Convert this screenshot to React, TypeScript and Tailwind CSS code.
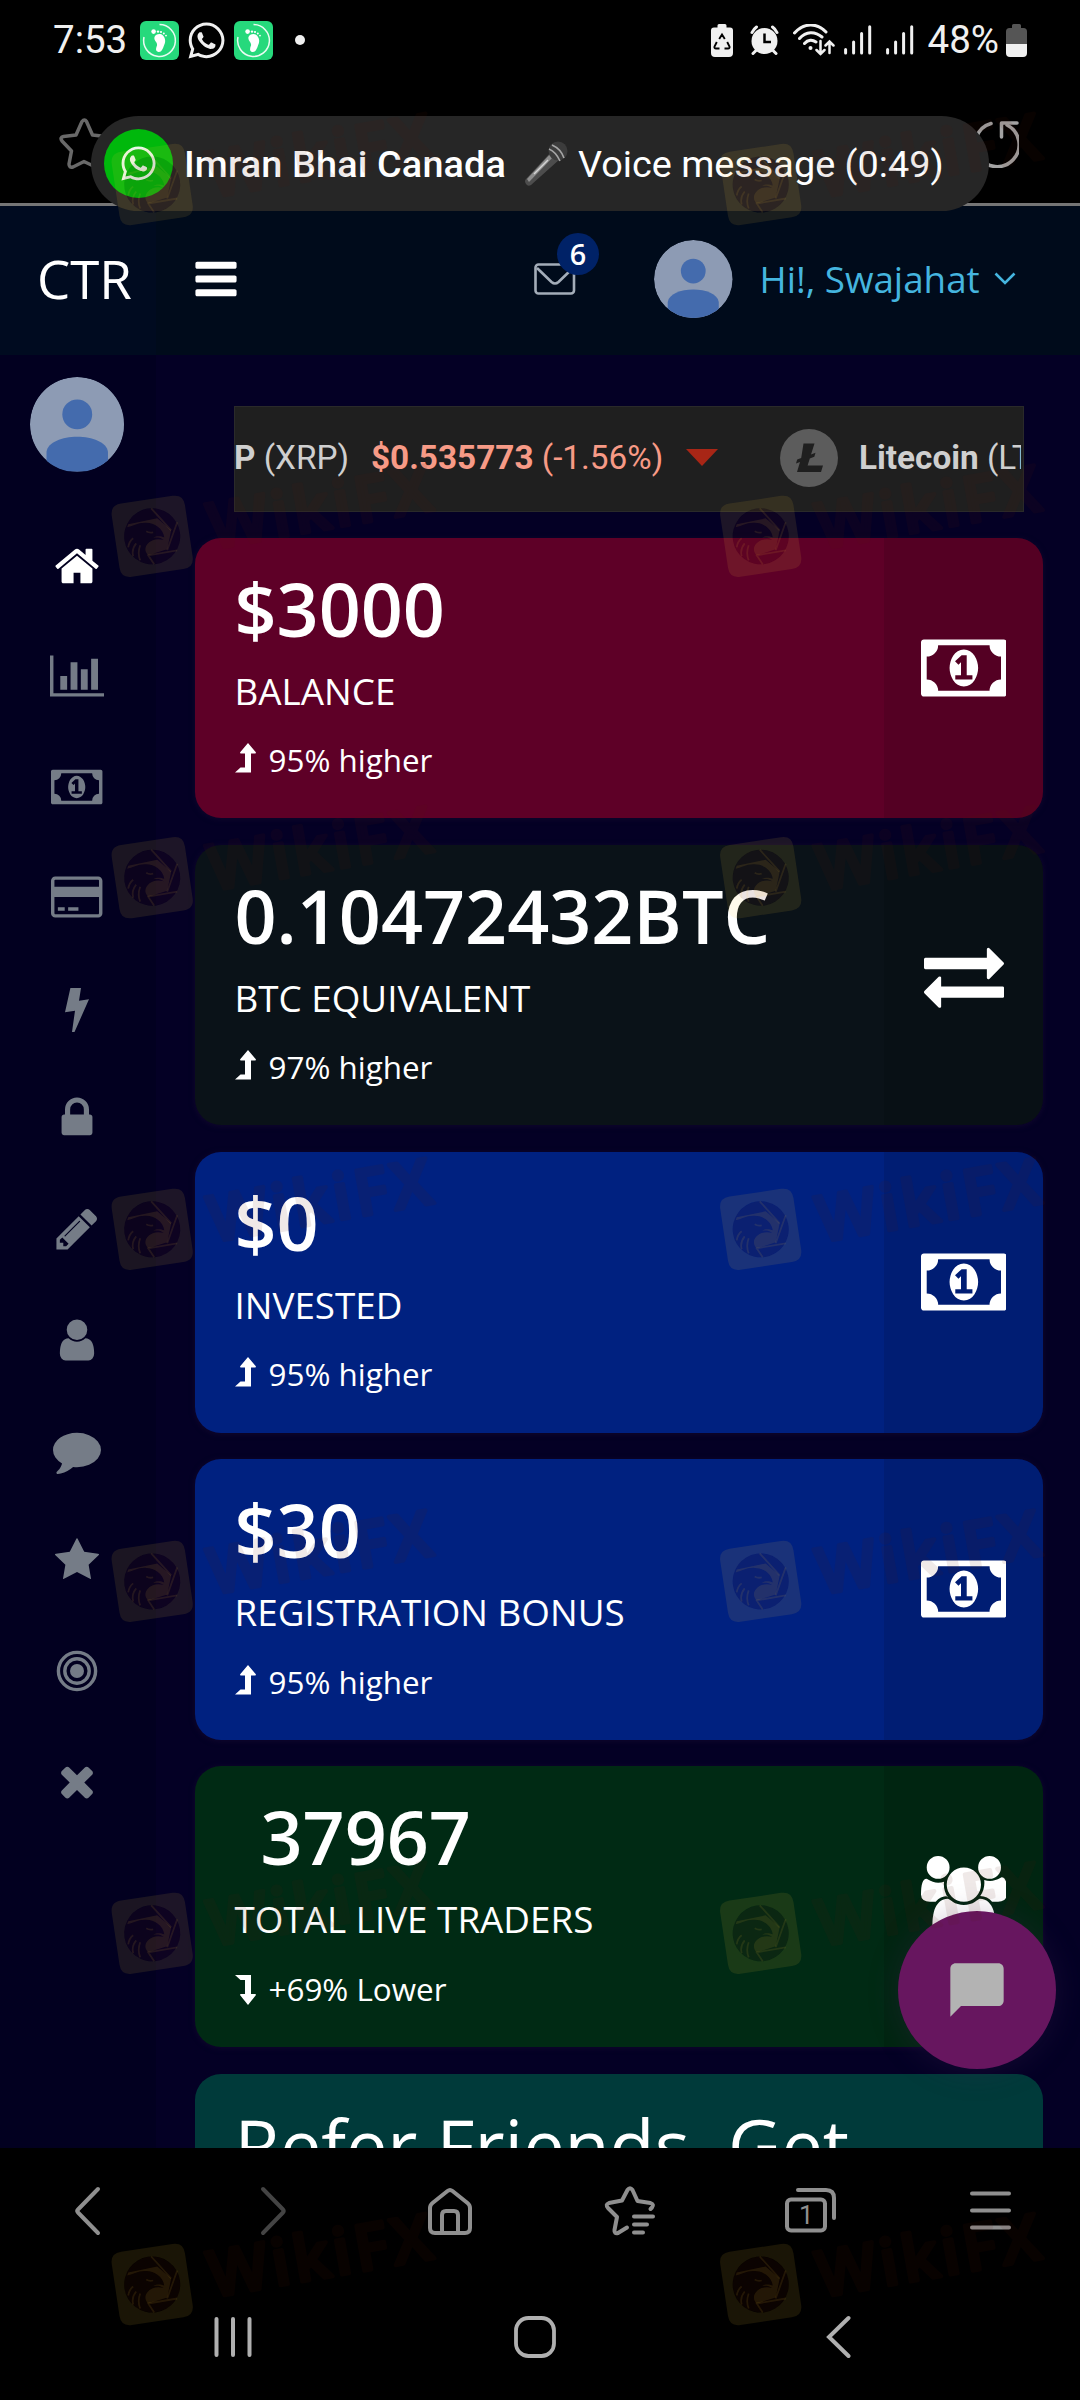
import React from "react";
import { FaWhatsapp } from "react-icons/fa";

type Glyph = { d: string; box: string; w: number };

const G: Record<string, Glyph> = {
  home: {
    box: "0 0 1792 1792",
    w: 1792,
    d: "M1472 992v480q0 26-19 45t-45 19h-384v-384h-256v384h-384q-26 0-45-19t-19-45v-480q0-1 .5-3t.5-3l575-474 575 474q1 2 1 6zm223-69l-62 74q-8 9-21 11h-3q-13 0-21-7l-692-577-692 577q-12 8-24 7-13-2-21-11l-62-74q-8-10-7-23.5t11-21.5l719-599q32-26 76-26t76 26l244 204v-195q0-14 9-23t23-9h192q14 0 23 9t9 23v408l219 182q10 8 11 21.5t-7 23.5z",
  },
  chart: {
    box: "0 0 2048 1792",
    w: 2048,
    d: "M640 896v512h-256v-512h256zm384-512v1024h-256v-1024h256zm1024 1152v128h-2048v-1536h128v1408h1920zm-640-896v768h-256v-768h256zm384-384v1152h-256v-1152h256z",
  },
  money: {
    box: "0 0 1920 1792",
    w: 1920,
    d: "M768 1152h384v-96h-128v-448h-114l-148 137 77 80q42-37 55-57h2v288h-128v96zm512-256q0 70-21 142t-59.5 134-101.5 101-138 39-138-39-101.5-101-59.5-134-21-142 21-142 59.5-134 101.5-101 138-39 138 39 101.5 101 59.5 134 21 142zm512 256v-512q-106 0-181-75t-75-181h-1152q0 106-75 181t-181 75v512q106 0 181 75t75 181h1152q0-106 75-181t181-75zm128-832v1152q0 26-19 45t-45 19h-1792q-26 0-45-19t-19-45v-1152q0-26 19-45t45-19h1792q26 0 45 19t19 45z",
  },
  card: {
    box: "0 0 1920 1792",
    w: 1920,
    d: "M1760 128q66 0 113 47t47 113v1216q0 66-47 113t-113 47h-1600q-66 0-113-47t-47-113v-1216q0-66 47-113t113-47h1600zm-1600 128q-13 0-22.500 9.500t-9.500 22.500v224h1664v-224q0-13-9.500-22.500t-22.500-9.500h-1600zm1600 1280q13 0 22.500-9.500t9.500-22.500v-608h-1664v608q0 13 9.500 22.500t22.500 9.500h1600zm-1504-128v-128h256v128h-256zm384 0v-128h384v128h-384z",
  },
  bolt: {
    box: "0 0 48 48",
    w: 1792,
    d: "M17.400 4H28L26 16.700 36 15.300 21.500 48H19L22 26.700 12 28.200z",
  },
  lock: {
    box: "0 0 1792 1792",
    w: 1792,
    d: "M640 768h512v-192q0-106-75-181t-181-75-181 75-75 181v192zm832 96v576q0 40-28 68t-68 28h-960q-40 0-68-28t-28-68v-576q0-40 28-68t68-28h32v-192q0-184 132-316t316-132 316 132 132 316v192h32q40 0 68 28t28 68z",
  },
  pencil: {
    box: "0 0 1792 1792",
    w: 1792,
    d: "M491 1536l91-91-235-235-91 91v107h128v128h107zm523-928q0-22-22-22-10 0-17 7l-542 542q-7 7-7 17 0 22 22 22 10 0 17-7l542-542q7-7 7-17zm-54-192l416 416-832 832h-416v-416zm683 96q0 53-37 90l-166 166-416-416 166-165q36-38 90-38 53 0 91 38l235 234q37 39 37 91z",
  },
  user: {
    box: "0 0 1792 1792",
    w: 1792,
    d: "M1536 1399q0 109-62.500 187t-150.500 78h-854q-88 0-150.500-78t-62.500-187q0-85 8.500-160.500t31.500-152 58.500-131 94-89 134.500-34.500q131 128 313 128t313-128q76 0 134.500 34.500t94 89 58.500 131 31.500 152 8.500 160.500zm-256-887q0 159-112.500 271.500t-271.500 112.500-271.500-112.500-112.500-271.500 112.500-271.500 271.500-112.500 271.500 112.500 112.500 271.500z",
  },
  comment: {
    box: "0 0 1792 1792",
    w: 1792,
    d: "M1792 896q0 174-120 321.500t-326 233-450 85.500q-70 0-145-8-198 175-460 242-49 14-114 22-17 2-30.500-9t-17.500-29v-1q-3-4-.5-12t2-10 4.500-9.500l6-9 7-8.500 8-9q7-8 31-34.500t34.500-38 31-39.500 32.500-51 27-59 26-76q-157-89-247.500-220t-90.500-281q0-130 71-248.500t191-204.500 286-136.500 348-50.500q244 0 450 85.500t326 233 120 321.500z",
  },
  star: {
    box: "0 0 1792 1792",
    w: 1792,
    d: "M1720 647q0 16-20 32l-370 360 88 508q1 7 1 14 0 14-12 8l-62-26-449-236-449 236-62 26q-12 6-12-8 0-6 1-14l88-508-370-360q-20-16-20-32 0-12 40-18l514-75 232-464q19-40 38-40t38 40l232 464 514 75q40 6 40 18z",
  },
  times: {
    box: "0 0 1792 1792",
    w: 1792,
    d: "M1490 1280q0 40-28 68l-136 136q-28 28-68 28t-68-28l-294-294-294 294q-28 28-68 28t-68-28l-136-136q-28-28-28-68t28-68l294-294-294-294q-28-28-28-68t28-68l136-136q28-28 68-28t68 28l294 294 294-294q28-28 68-28t68 28l136 136q28 28 28 68t-28 68l-294 294 294 294q28 28 28 68z",
  },
  bars: {
    box: "0 0 1792 1792",
    w: 1792,
    d: "M1664 1344v128q0 26-19 45t-45 19h-1408q-26 0-45-19t-19-45v-128q0-26 19-45t45-19h1408q26 0 45 19t19 45zm0-512v128q0 26-19 45t-45 19h-1408q-26 0-45-19t-19-45v-128q0-26 19-45t45-19h1408q26 0 45 19t19 45zm0-512v128q0 26-19 45t-45 19h-1408q-26 0-45-19t-19-45v-128q0-26 19-45t45-19h1408q26 0 45 19t19 45z",
  },
  exchange: {
    box: "0 0 1792 1792",
    w: 1792,
    d: "M1792 1184v192q0 13-9.500 22.500t-22.500 9.500h-1376v192q0 13-9.500 22.500t-22.500 9.500q-12 0-24-10l-319-320q-9-9-9-22 0-14 9-23l320-320q9-9 23-9 13 0 22.500 9.500t9.500 22.500v192h1376q13 0 22.500 9.500t9.500 22.500zm0-544q0 14-9 23l-320 320q-9 9-23 9-13 0-22.500-9.500t-9.500-22.500v-192h-1376q-13 0-22.500-9.500t-9.500-22.500v-192q0-13 9.500-22.500t22.500-9.500h1376v-192q0-14 9-23t23-9q12 0 24 10l319 319q9 9 9 23z",
  },
  users: {
    box: "64 0 1920 1792",
    w: 1920,
    d: "M657 896q-162 5-265 128h-134q-82 0-138-40.500t-56-118.500q0-353 124-353 6 0 43.500 21t97.500 42.500 119 21.500q67 0 133-23-5 37-5 66 0 159 93 293zm1071 637q0 120-73 189.500t-194 69.500h-874q-121 0-194-69.500t-73-189.500q0-53 3.500-103.500t14-109 26.500-108.500 43-97.500 62-81 85.500-53.500 111.500-20q10 0 43 21.500t73 48 107 48 135 21.500 135-21.500 107-48 73-48 43-21.500q61 0 111.500 20t85.500 53.500 62 81 43 97.500 26.500 108.500 14 109 3.500 103.500zm-1024-1277q0 106-75 181t-181 75-181-75-75-181 75-181 181-75 181 75 75 181zm704 384q0 159-112.500 271.500t-271.500 112.500-271.500-112.500-112.500-271.500 112.500-271.500 271.500-112.500 271.500 112.500 112.500 271.500zm576 225q0 78-56 118.500t-138 40.500h-134q-103-123-265-128 93-134 93-293 0-29-5-66 66 23 133 23 59 0 119-21.500t97.500-42.500 43.500-21q124 0 124 353zm-128-609q0 106-75 181t-181 75-181-75-75-181 75-181 181-75 181 75 75 181z",
  },
};

function Icon({ name, size }: { name: string; size: number }) {
  const g = G[name];
  return (
    <svg width={(g.w / 1792) * size} height={size} viewBox={g.box} fill="currentColor" className="shrink-0">
      <path d={g.d} fillRule="evenodd" />
    </svg>
  );
}

function Avatar({ size }: { size: number }) {
  return (
    <svg width={size} height={size} viewBox="0 0 100 100" className="shrink-0 rounded-full">
      <circle cx="50" cy="50" r="50" fill="#8d9bb4" />
      <circle cx="50" cy="39.6" r="15.8" fill="#446bad" />
      <path d="M17.5 100V79C19 69 34 63.2 50 63.2S81 69 82.5 79V100Z" fill="#446bad" />
    </svg>
  );
}

function StepsIcon() {
  return (
    <svg width="39" height="39" viewBox="0 0 39 39">
      <rect width="39" height="39" rx="6" fill="#26d97c" />
      <path d="M19.5 3.6A15.9 15.9 0 1 1 4 16" fill="none" stroke="#fff" strokeWidth="1.5" opacity=".9" />
      <path d="M14.500 16c1-3 6-4 8.500-1.500 3 3.500 2.500 7 1 10-1 3-2.500 7-5.500 6.500-3.500-.8-2.500-4-1.500-6.500.8-3.500-3.500-4.500-2.500-8.500z" fill="#fff" />
      <circle cx="13.6" cy="10.6" r="2.3" fill="#fff" />
      <circle cx="18" cy="10.6" r="1.2" fill="#fff" />
      <circle cx="21" cy="11" r="1.1" fill="#fff" />
      <circle cx="23.8" cy="12.4" r="1" fill="#fff" />
      <circle cx="26" cy="14.6" r=".9" fill="#fff" />
    </svg>
  );
}

function Signal() {
  return (
    <svg width="28" height="30" viewBox="0 0 28 30" stroke="#f0f0f0" strokeWidth="3" strokeLinecap="round">
      <path d="M1.6 24.5v3.5M9.6 17v11M17.600 8.500v19.500M25.700 1.700v26.300" />
    </svg>
  );
}

function StatusBar() {
  return (
    <div className="flex h-[80px] w-full items-center bg-black pl-[53px] pr-[53px] font-['Roboto'] text-[38.5px] text-[#f0f0f0]">
      <span className="w-[87px] leading-none">7:53</span>
      <StepsIcon />
      <FaWhatsapp size={41} className="ml-[7px] mr-[7px]" />
      <StepsIcon />
      <span className="ml-[22px] size-[10px] rounded-full bg-[#f0f0f0]" />
      <div className="ml-auto flex items-center">
        <svg width="22" height="33" viewBox="0 0 22 33" className="mr-[17px]">
          <path d="M6.500 3.500V1.500Q6.500 0 8 0h6q1.500 0 1.500 1.500v2H19q3 0 3 3V29q0 4-4 4H4q-4 0-4-4V6.500q0-3 3-3z" fill="#f0f0f0" />
          <path d="M8.200 15l2.800-4.500 2.800 4.500M5.800 18l-2.300 4.500q-.5 2 1.500 2h3.500M16.200 18l2.300 4.500q.5 2-1.500 2h-3.500" fill="none" stroke="#000" strokeWidth="1.900" />
        </svg>
        <svg width="29" height="30" viewBox="0 0 29 30" className="mr-[14px]">
          <circle cx="14.500" cy="16" r="13" fill="#f0f0f0" />
          <path d="M2 7.500A14 14 0 0 1 6.500 2M27 7.500A14 14 0 0 0 22.500 2M3 28.500l3-3M26 28.500l-3-3" stroke="#f0f0f0" strokeWidth="3" strokeLinecap="round" />
          <path d="M14.500 8.500V17H21" fill="none" stroke="#000" strokeWidth="2.500" />
        </svg>
        <svg width="42" height="32" viewBox="0 0 42 32" fill="none" stroke="#f0f0f0" strokeWidth="3" strokeLinecap="round" className="mr-[9px]">
          <path d="M1.500 9C11-1.500 24-1.500 33 8M6.500 14.500C13 7 22 7 29 13M11.500 19.500C15 15.500 19.500 15.500 23 18" />
          <circle cx="17.500" cy="24" r="2" fill="#f0f0f0" stroke="none" />
          <path d="M27.500 17v13M23.500 26l4 4 4-4M36.500 29V17.500M32.500 21.500l4-4 4 4" strokeWidth="2.500" />
        </svg>
        <Signal />
        <span className="w-[14px]" />
        <Signal />
        <span className="ml-[14px] leading-none">48%</span>
        <svg width="21" height="33" viewBox="0 0 21 33" className="ml-[7px]">
          <path d="M6 4V1.500Q6 0 7.500 0h6Q15 0 15 1.500V4h2.500Q21 4 21 7.500V20H0V7.500Q0 4 3.500 4z" fill="#555" />
          <path d="M0 20h21v9q0 4-4 4H4q-4 0-4-4z" fill="#f0f0f0" />
        </svg>
      </div>
    </div>
  );
}

function Mic() {
  return (
    <svg width="44" height="46" viewBox="0 0 44 46" className="shrink-0">
      <path d="M2 38L28 10l8 8L7 44q-3 2-5-1t0-5z" fill="#4d4d4d" />
      <path d="M3 38L28 11l3 3L5 41z" fill="#8d8d8d" />
      <path d="M10 33l14-14" stroke="#d4d4d4" strokeWidth="1.5" />
      <circle cx="34" cy="10" r="9.5" fill="#3c3c3c" />
      <path d="M25 8q7 3 11 12M28 4q9 4 12 13" stroke="#a5a5a5" strokeWidth="1.6" fill="none" />
    </svg>
  );
}

function Notification() {
  return (
    <div className="absolute left-[91px] top-[116px] flex h-[95px] w-[898px] items-center rounded-full bg-[#262626] pl-[13px] font-['Roboto'] text-[37.8px] text-white">
      <div className="flex size-[69px] shrink-0 items-center justify-center rounded-full bg-[#00b80c]">
        <FaWhatsapp size={39} className="text-[#e8f8e8]" />
      </div>
      <span className="ml-[11px] w-[340px] shrink-0 whitespace-nowrap pt-[2px] font-medium tracking-[0.15px]">Imran Bhai Canada</span>
      <Mic />
      <span className="ml-[10px] whitespace-nowrap pt-[2px]">Voice message (0:49)</span>
    </div>
  );
}

function BrowserBar() {
  return (
    <div className="flex h-[126px] w-full justify-between border-b-[3px] border-[#757575] bg-black pl-[58px] pr-[61px] pt-[38px]">
      <svg width="52" height="52" viewBox="0 0 52 52" fill="none" stroke="#696969" strokeWidth="3.5" strokeLinejoin="round">
        <path d="M24 3.500q2.500-3 4.500 0l6 13.500 13 1.500q4 1.500 1.500 5L39 33.500l2.500 12.500q0 4-4 3L26 43.500 15 49q-4 1-4-3l2.500-13L4 23q-2.500-3.500 1.500-4.500L18 17z" />
      </svg>
      <svg width="50" height="50" viewBox="0 0 50 50" fill="none" stroke="#a3a3a3" strokeWidth="3.5" strokeLinecap="round">
        <path d="M22 5.500A22 22 0 1 0 38 7" />
        <path d="M48 5H32.500V19" strokeLinejoin="round" />
      </svg>
    </div>
  );
}

function SiteHeader() {
  return (
    <div className="flex h-[149px] w-full bg-[#000b1b] font-['Open_Sans']">
      <div className="flex w-[156px] items-center bg-[#000b20] pb-[3px] pl-[37px] text-[52.8px] leading-none text-white">CTR</div>
      <div className="flex flex-1 items-center pb-[3px] pl-[36px]">
        <div className="text-white"><Icon name="bars" size={48} /></div>
        <div className="relative ml-[294px]">
          <svg width="42" height="32" viewBox="0 0 42 32" fill="none" stroke="#a3adb9" strokeWidth="2.6">
            <rect x="1.5" y="1.5" width="38.5" height="29" rx="3" />
            <path d="M3 5l14.500 14q3.500 3 7 0L39 5" />
          </svg>
          <span className="absolute -top-[30px] left-[23px] flex size-[42px] items-center justify-center rounded-full bg-[#002267] text-[28.8px] font-semibold leading-none text-white">6</span>
        </div>
        <div className="ml-[78px]"><Avatar size={78.5} /></div>
        <span className="ml-[27px] whitespace-nowrap text-[36.8px] leading-none text-[#45b5df]">Hi!, Swajahat</span>
        <svg width="22" height="14" viewBox="0 0 22 14" className="ml-[14px]" fill="none" stroke="#45b5df" strokeWidth="2.6">
          <path d="M1.500 1.500l9.500 9.500 9.500-9.500" />
        </svg>
      </div>
    </div>
  );
}

const sideItems = ["home", "chart", "money", "card", "bolt", "lock", "pencil", "user", "comment", "star", "target", "times"];

function Sidebar() {
  return (
    <div className="flex w-[156px] shrink-0 flex-col items-center bg-[#020020] pr-[2px] pt-[22px]">
      <Avatar size={94.5} />
      <div className="mt-[70px] flex flex-col items-center gap-[62.6px] text-[#757c87]">
        {sideItems.map((n) =>
          n === "target" ? (
            <svg key={n} width="48" height="48" viewBox="0 0 48 48" fill="none" stroke="currentColor" strokeWidth="3.4">
              <circle cx="24" cy="24" r="18.6" />
              <circle cx="24" cy="24" r="12.2" />
              <circle cx="24" cy="24" r="7" fill="currentColor" stroke="none" />
            </svg>
          ) : (
            <span key={n} className={n === "home" ? "text-white" : ""}>
              <Icon name={n} size={48} />
            </span>
          )
        )}
      </div>
    </div>
  );
}

function Ticker() {
  return (
    <div className="ml-[39px] flex h-[106px] w-[790px] shrink-0 items-center overflow-hidden whitespace-nowrap border border-[#2a2a2a] bg-[#1f1f1f] pr-[2px] font-['Roboto'] text-[33.3px] text-[#cfcfcf]">
      <div className="flex h-full w-full items-center overflow-hidden pb-[3px]">
        <span className="-ml-px w-[137px] shrink-0"><b className="font-bold">P</b> (XRP)</span>
        <span className="w-[294px] shrink-0 text-[#f79a86]"><b className="font-bold">$0.535773</b> (-1.56%)</span>
        <svg width="32" height="17" viewBox="0 0 32 17" className="ml-[21px] shrink-0"><path d="M0 0h32L16 17z" fill="#a82616" /></svg>
        <svg width="58" height="58" viewBox="0 0 58 58" className="ml-[62px] shrink-0">
          <circle cx="29" cy="29" r="29" fill="#5c5c5c" />
          <path d="M23.500 14.500h11L31 25.500l4.500-1.700-1.200 4-4.500 1.700-2.200 7H43l-2 6.500H17l3-10-4 1.400 1.200-4 4-1.500z" fill="#1f1f1f" />
        </svg>
        <span className="ml-[21px]"><b className="font-bold">Litecoin</b> (LTC)</span>
      </div>
    </div>
  );
}

type CardData = { bg: string; title: string; label: string; note: string; icon: string; down?: boolean; indent?: boolean };

const cards: CardData[] = [
  { bg: "bg-[#5e0027]", title: "$3000", label: "BALANCE", note: "95% higher", icon: "money" },
  { bg: "bg-[#0a1218]", title: "0.10472432BTC", label: "BTC EQUIVALENT", note: "97% higher", icon: "exchange" },
  { bg: "bg-[#002180]", title: "$0", label: "INVESTED", note: "95% higher", icon: "money" },
  { bg: "bg-[#002180]", title: "$30", label: "REGISTRATION BONUS", note: "95% higher", icon: "money" },
  { bg: "bg-[#002a14]", title: "37967", label: "TOTAL LIVE TRADERS", note: "+69% Lower", icon: "users", down: true, indent: true },
];

function StatCard({ c }: { c: CardData }) {
  return (
    <div className={`flex h-[280.7px] w-[848px] shrink-0 overflow-hidden rounded-[26px] text-white shadow-[0_1px_6px_rgba(40,20,60,0.35)] ${c.bg}`}>
      <div className="flex-1 pl-[39.5px] pt-[31px]">
        <div className={`whitespace-nowrap text-[73.6px] font-semibold leading-[80px] ${c.indent ? "pl-[26px]" : ""}`}>{c.title}</div>
        <div className="mt-[17px] whitespace-nowrap text-[36.8px] leading-[50px]">{c.label}</div>
        <div className="mt-[22.5px] flex items-start text-[31.4px] leading-[44px]">
          <svg width="21" height="30" viewBox="0 0 21 30" fill="#fff" className={c.down ? "mr-[13px] mt-[8px]" : "mr-[13px] mt-[5px]"}>
            {c.down ? (
              <path d="M0 0H16V19h4.200q1 .4.600 1.300L13 30 5.200 20.300Q4.800 19.400 5.800 19H10V5H5.500Z" />
            ) : (
              <path d="M0 29.500H16V10.500h4.200q1-.4.600-1.300L13 0 5.200 9.200Q4.800 10.100 5.800 10.500H10V24.500H5.500Z" />
            )}
          </svg>
          {c.note}
        </div>
      </div>
      <div className="flex w-[159px] justify-center bg-black/10 pt-[90px]">
        <Icon name={c.icon} size={80} />
      </div>
    </div>
  );
}

function Main() {
  return (
    <div className="flex flex-1 flex-col bg-[#040025] pl-[39px] pt-[51px]">
      <Ticker />
      <div className="mt-[25.6px] flex flex-col gap-[26.5px]">
        {cards.map((c) => (
          <StatCard key={c.label} c={c} />
        ))}
        <div className="h-[281px] w-[848px] shrink-0 rounded-[26px] bg-[#003a3a] pl-[39.5px] pt-[31.5px] text-[73.6px] leading-[80px] text-white">
          Refer Friends, Get
        </div>
      </div>
    </div>
  );
}

function BrowserNav() {
  const s = { fill: "none", stroke: "currentColor", strokeWidth: 4, strokeLinecap: "round" as const, strokeLinejoin: "round" as const };
  return (
    <div className="flex h-[127px] w-full items-center bg-black pb-[2px] pl-[61px] text-[#8f8f8f]">
      <svg width="54" height="54" viewBox="0 0 54 54" {...s}><path d="M37 5L17 25.500q-1.500 1.500 0 3L37 49" /></svg>
      <svg width="54" height="54" viewBox="0 0 54 54" {...s} className="ml-[131px] text-[#444]"><path d="M17 5l20 20.500q1.500 1.500 0 3L17 49" /></svg>
      <svg width="54" height="54" viewBox="0 0 54 54" {...s} className="ml-[123px]">
        <path d="M7 24q0-3 2.500-5L24.500 7q2.500-2 5 0l15 12Q47 21 47 24v20q0 5-5 5H12q-5 0-5-5z" />
        <path d="M19 48V31q0-4 4-4h8q4 0 4 4v17" />
      </svg>
      <svg width="54" height="54" viewBox="0 0 54 54" {...s} className="ml-[125px]">
        <path d="M25 43.500l-9 5.500q-4 1-3.500-3l2.500-13L6 24q-3-3.500 1-5l13-2.500L25.500 6q2.500-3.500 5 0L35.500 17l13 2q4 1.500 1.500 4.500l-1.500 1.500" />
        <path d="M32 32.500h19M32 40.500h13M32 48.500h9" />
      </svg>
      <div className="relative ml-[127px] flex size-[54px] items-center">
        <svg width="54" height="54" viewBox="0 0 54 54" {...s}>
          <rect x="4" y="15.5" width="38" height="31" rx="4" />
          <path d="M15 6h28q8 0 8 8v20" />
        </svg>
        <span className="absolute left-[16px] top-[18px] font-['Roboto'] text-[26px] leading-[27px]">1</span>
      </div>
      <svg width="54" height="54" viewBox="0 0 54 54" {...s} className="ml-[126px]"><path d="M9 9.500h37M9 26.500h37M9 43.500h37" /></svg>
    </div>
  );
}

function SystemNav() {
  return (
    <div className="flex h-[125px] w-full items-center bg-black pb-[1px] pl-[214px] text-[#b0b0b0]">
      <svg width="38" height="42" viewBox="0 0 38 42" stroke="currentColor" strokeWidth="4" strokeLinecap="round" className="mr-[262px]">
        <path d="M2.500 3v36M19 3v36M35.500 3v36" />
      </svg>
      <svg width="42" height="42" viewBox="0 0 42 42" fill="none" stroke="currentColor" strokeWidth="3.8" className="mr-[270px]">
        <rect x="2" y="2" width="38" height="38" rx="12.5" />
      </svg>
      <svg width="25" height="44" viewBox="0 0 25 44" fill="none" stroke="currentColor" strokeWidth="4" strokeLinecap="round">
        <path d="M22.500 3L3 22l19.500 19" />
      </svg>
    </div>
  );
}

const stampRows = [184.5, 536.3, 877.7, 1229.3, 1581.4, 1933.3, 2284.5];
const stampCols = [152.2, 760.7];

/* Repeating brand stamp laid over the whole screen */
function Stamps() {
  const gold = "rgba(255,210,60,0.1)";
  const ink = "rgba(90,25,10,0.12)";
  return (
    <svg className="pointer-events-none absolute inset-0" width="1080" height="2400" viewBox="0 0 1080 2400">
      {stampRows.map((y) =>
        stampCols.map((x) => (
          <g key={`${x}-${y}`} transform={`translate(${x} ${y})`}>
            <path
              transform="rotate(-8.5)"
              fill={gold}
              fillRule="evenodd"
              d="M-26-37H26Q37-37 37-26V26Q37 37 26 37H-26Q-37 37-37 26V-26Q-37-37-26-37zM-28 0A28 28 0 1 0 28 0 28 28 0 1 0-28 0z"
            />
            <circle r="28" fill={ink} />
            <path
              d="M-25-9C-20-10-14-14-6-13.500 2-13.500 11-8 12 1 9 0 5-1 1 1.500 5 1 8 1 11.500 3.500 5 2-1 3-5 8-8 12-7 16-4 19L15 13 19-6 5-18-24-12z"
              fill={gold}
            />
            <path d="M-1-28L19-6M25-14L15 14M25 14L-4 19 2 28M-24 11q1-6 5-9M-19 20q-2-7 3-13M-12 24q-3-7 0-15M-6-5q3 2 7 1" fill="none" stroke={gold} strokeWidth="1.8" />
            <g opacity="0.09">
              <text
                transform="translate(60 13) rotate(-10)"
                textLength="226"
                lengthAdjust="spacing"
                fontFamily="Open Sans, sans-serif"
                fontWeight="600"
                fontSize="64"
                fill="#5a190a"
                stroke="#5a190a"
                strokeWidth="4"
                strokeLinejoin="round"
              >
                WikiFX
              </text>
            </g>
          </g>
        ))
      )}
    </svg>
  );
}

export default function App() {
  return (
    <div className="relative flex h-[2400px] w-[1080px] flex-col overflow-hidden bg-black">
      <StatusBar />
      <BrowserBar />
      <div className="flex h-[1942px] w-full flex-col overflow-hidden font-['Open_Sans']">
        <SiteHeader />
        <div className="flex min-h-0 flex-1">
          <Sidebar />
          <Main />
        </div>
      </div>
      <BrowserNav />
      <SystemNav />
      <Notification />
      <button className="absolute left-[898px] top-[1911px] flex size-[158px] items-center justify-center rounded-full bg-[#67165f] shadow-[0_2px_30px_rgba(70,40,90,0.25)]">
        <svg width="64" height="64" viewBox="0 0 24 24" fill="#b3b3b3">
          <path d="M20 2H4c-1.100 0-2 .9-2 2v18l4-4h14c1.100 0 2-.9 2-2V4c0-1.100-.9-2-2-2z" />
        </svg>
      </button>
      <Stamps />
    </div>
  );
}
